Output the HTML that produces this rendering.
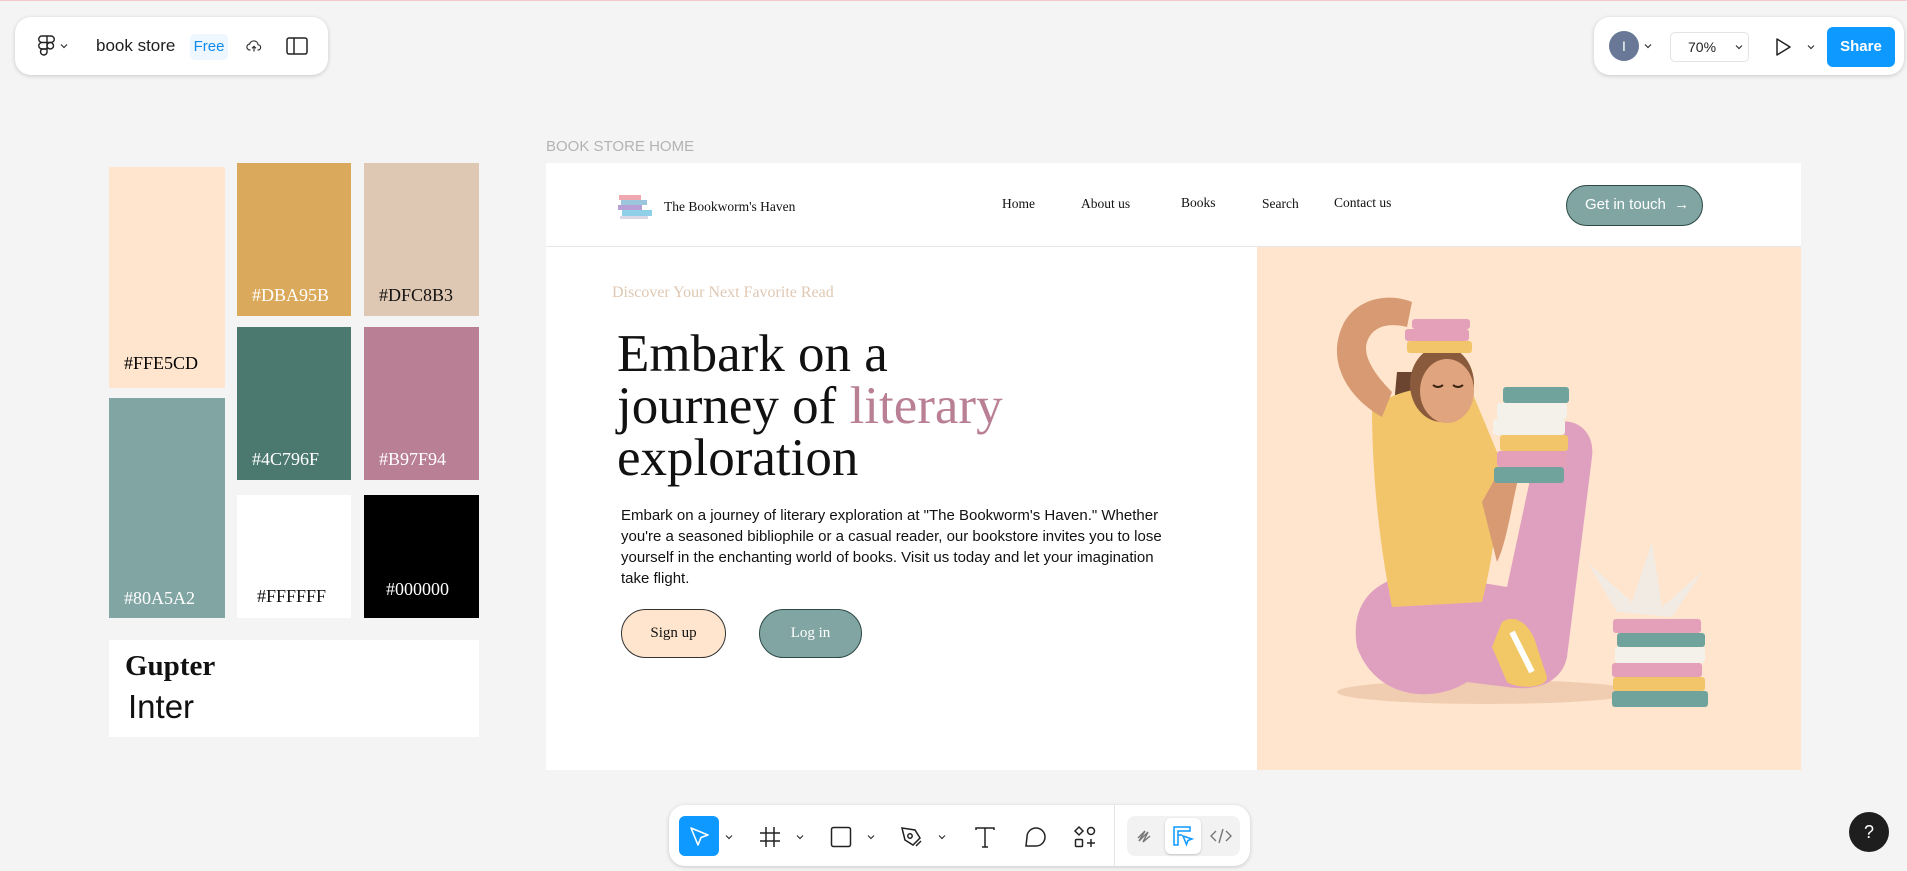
<!DOCTYPE html>
<html><head><meta charset="utf-8"><style>
*{box-sizing:border-box;margin:0;padding:0}
body{width:1907px;height:871px;background:#f4f4f4;position:relative;overflow:hidden;font-family:"Liberation Sans",sans-serif}
.a{position:absolute}
.panel{background:#fff;border-radius:16px;box-shadow:0 1px 4px rgba(0,0,0,.18)}
.sw{position:absolute;font-family:"Liberation Serif",serif;font-size:18px;padding-left:15px}
.serif{font-family:"Liberation Serif",serif}
.nav{position:absolute;top:196px;font-family:"Liberation Serif",serif;font-size:13.5px;color:#111}
</style></head><body>
<div class="a" style="left:0;top:0;width:1907px;height:1px;background:#f3c9cf"></div>

<div class="a panel" style="left:15px;top:17px;width:313px;height:58px">
  <svg class="a" style="left:22px;top:18px" width="20" height="22" viewBox="0 0 20 22" fill="none" stroke="#222" stroke-width="1.4"><path d="M5 1h5v6.5H5a3.25 3.25 0 010-6.5zM10 1h4a3.25 3.25 0 010 6.5h-4zM5 7.5h5V14H5a3.25 3.25 0 010-6.5z"/><circle cx="13.25" cy="10.75" r="3.25"/><path d="M5 14h5v3.25A3.25 3.25 0 115 14z"/></svg>
  <svg class="a" style="left:45px;top:26px" width="8" height="6" viewBox="0 0 8 6"><path d="M1 1.5l3 3 3-3" stroke="#333" fill="none" stroke-width="1.2"/></svg>
  <div class="a" style="left:81px;top:19px;font-size:17px;color:#1e1e1e">book store</div>
  <div class="a" style="left:175px;top:17px;width:38px;height:26px;background:#eef6ff;border-radius:5px;color:#0d8ce9;font-size:15px;text-align:center;line-height:26px">Free</div>
  <svg class="a" style="left:231px;top:22px" width="16" height="14" viewBox="0 0 16 14" fill="none" stroke="#333" stroke-width="1.2"><path d="M4.5 11H4a3 3 0 01-.3-6 4.3 4.3 0 018.4.8A2.6 2.6 0 0112 11h-.5"/><path d="M8 12.5V7.5M6 9.3l2-2 2 2"/></svg>
  <svg class="a" style="left:271px;top:20px" width="22" height="18" viewBox="0 0 22 18" fill="none" stroke="#222" stroke-width="1.5"><rect x="1" y="1" width="20" height="16" rx="2"/><path d="M8 1v16"/></svg>
</div>

<div class="a panel" style="left:1594px;top:17px;width:310px;height:58px">
  <div class="a" style="left:15px;top:14px;width:30px;height:30px;border-radius:50%;background:#6a7898;color:#fff;text-align:center;line-height:30px;font-size:14px">I</div>
  <svg class="a" style="left:50px;top:26px" width="8" height="6"><path d="M1 1.5l3 3 3-3" stroke="#333" fill="none" stroke-width="1.2"/></svg>
  <div class="a" style="left:76px;top:15px;width:79px;height:30px;border:1px solid #e3e3e3;border-radius:5px;font-size:14px;line-height:28px;padding-left:17px;color:#222">70%</div>
  <svg class="a" style="left:141px;top:27px" width="8" height="6"><path d="M1 1.5l3 3 3-3" stroke="#333" fill="none" stroke-width="1.2"/></svg>
  <svg class="a" style="left:180px;top:20px" width="18" height="20" viewBox="0 0 18 20"><path d="M3 2l13 8-13 8z" fill="none" stroke="#222" stroke-width="1.5" stroke-linejoin="round"/></svg>
  <svg class="a" style="left:213px;top:27px" width="8" height="6"><path d="M1 1.5l3 3 3-3" stroke="#333" fill="none" stroke-width="1.2"/></svg>
  <div class="a" style="left:233px;top:10px;width:68px;height:40px;background:#0d99ff;border-radius:6px;color:#fff;font-size:15px;font-weight:bold;text-align:center;line-height:40px">Share</div>
</div>

<div class="a" style="left:109px;top:167px;width:116px;height:221px;background:#FFE5CD"><div class="sw" style="top:186px">#FFE5CD</div></div>
<div class="a" style="left:109px;top:398px;width:116px;height:220px;background:#80A5A2"><div class="sw" style="top:190px;color:#fff">#80A5A2</div></div>
<div class="a" style="left:237px;top:163px;width:114px;height:153px;background:#DBA95B"><div class="sw" style="top:122px;color:#fff">#DBA95B</div></div>
<div class="a" style="left:364px;top:163px;width:115px;height:153px;background:#DFC8B3"><div class="sw" style="top:122px;color:#111">#DFC8B3</div></div>
<div class="a" style="left:237px;top:327px;width:114px;height:153px;background:#4C796F"><div class="sw" style="top:122px;color:#fff">#4C796F</div></div>
<div class="a" style="left:364px;top:327px;width:115px;height:153px;background:#B97F94"><div class="sw" style="top:122px;color:#fff">#B97F94</div></div>
<div class="a" style="left:237px;top:495px;width:114px;height:123px;background:#FFFFFF"><div class="sw" style="top:91px;color:#111;padding-left:20px">#FFFFFF</div></div>
<div class="a" style="left:364px;top:495px;width:115px;height:123px;background:#000"><div class="sw" style="top:84px;color:#fff;padding-left:22px">#000000</div></div>
<div class="a" style="left:109px;top:640px;width:370px;height:97px;background:#fff">
  <div class="a serif" style="left:16px;top:10px;font-size:29px;font-weight:bold;color:#111">Gupter</div>
  <div class="a" style="left:19px;top:48px;font-size:33px;color:#111">Inter</div>
</div>

<div class="a" style="left:546px;top:138px;font-size:15px;color:#b3b3b3">BOOK STORE HOME</div>
<div class="a" style="left:546px;top:163px;width:1255px;height:607px;background:#fff"></div>
<div class="a" style="left:546px;top:246px;width:1255px;height:1px;background:#e6e6e6"></div>
<div class="a" style="left:1257px;top:247px;width:544px;height:523px;background:#FFE5CD"></div>

<svg class="a" style="left:617px;top:194px" width="38" height="26" viewBox="0 0 38 26"><rect x="2" y="1" width="22" height="5" fill="#f0a8b0"/><rect x="4" y="6" width="26" height="5" fill="#9cc6dd"/><rect x="1" y="11" width="24" height="5" fill="#b7a0d6"/><rect x="5" y="16" width="30" height="6" fill="#8fd0e8"/><rect x="3" y="22" width="28" height="3" fill="#d8d8e8"/></svg>
<div class="a serif" style="left:664px;top:199px;font-size:13.5px;color:#111">The Bookworm's Haven</div>
<div class="nav" style="left:1002px">Home</div>
<div class="nav" style="left:1081px">About us</div>
<div class="nav" style="left:1181px;top:195px">Books</div>
<div class="nav" style="left:1262px">Search</div>
<div class="nav" style="left:1334px;top:195px">Contact us</div>
<div class="a" style="left:1566px;top:185px;width:137px;height:41px;background:#80A5A2;border:1.5px solid #2c4a45;border-radius:21px;color:#fff;font-size:15px;line-height:38px;padding-left:18px">Get in touch <span style="margin-left:4px">→</span></div>

<div class="a serif" style="left:612px;top:284px;font-size:16px;color:#dfc8b3">Discover Your Next Favorite Read</div>
<div class="a serif" style="left:617px;top:328px;font-size:53px;line-height:52px;color:#111">Embark on a<br>journey of <span style="color:#B97F94">literary</span><br>exploration</div>
<div class="a" style="left:621px;top:505px;width:560px;font-size:15px;line-height:21px;color:#111">Embark on a journey of literary exploration at "The Bookworm's Haven." Whether you're a seasoned bibliophile or a casual reader, our bookstore invites you to lose yourself in the enchanting world of books. Visit us today and let your imagination take flight.</div>
<div class="a serif" style="left:621px;top:609px;width:105px;height:49px;background:#FFE5CD;border:1.3px solid #333;border-radius:25px;text-align:center;line-height:46px;font-size:15px;color:#111">Sign up</div>
<div class="a serif" style="left:759px;top:609px;width:103px;height:49px;background:#80A5A2;border:1.3px solid #2c4a45;border-radius:25px;text-align:center;line-height:46px;font-size:15px;color:#fff">Log in</div>

<svg class="a" style="left:1257px;top:247px" width="544" height="523" viewBox="0 0 544 523">
  <ellipse cx="230" cy="445" rx="150" ry="12" fill="#f0cdb0"/>
  <path d="M100 400c-10-60 40-80 90-70l60 10 30-140c10-40 60-30 55 10l-25 200c-5 25-30 35-60 30l-40-5c-30 20-90 20-110-35z" fill="#dfa0c0"/>
  <path d="M245 375c15-10 30 5 35 25l10 30c0 12-30 12-40 5l-15-35z" fill="#f2c765"/>
  <path d="M255 385l20 40" stroke="#fff" stroke-width="6"/>
  <path d="M140 125c-4 40-6 80 2 110l20-5c-6-30-6-70-2-105z" fill="#6b4530"/>
  <path d="M115 160c30-20 70-25 100-15l25 60c5 50-5 110-15 150l-90 5c-10-50-20-120-20-200z" fill="#f3c56a"/>
  <path d="M125 170c-35-20-55-55-40-90 12-28 45-35 70-25l-5 25c-20-5-35 0-40 15-5 15 10 35 25 50z" fill="#d79a72"/>
  <path d="M225 255l15 60c10-20 15-60 25-100l-15-5z" fill="#d79a72"/>
  <ellipse cx="185" cy="137" rx="32" ry="38" fill="#8a5a3c"/>
  <ellipse cx="190" cy="144" rx="27" ry="32" fill="#e0a47e"/>
  <path d="M176 138q5 4 10 0M196 138q5 4 10 0" stroke="#3a2416" stroke-width="2" fill="none"/>
  <rect x="150" y="94" width="65" height="12" rx="3" fill="#f3c56a"/>
  <rect x="148" y="82" width="64" height="12" rx="3" fill="#e3a0b8"/>
  <rect x="155" y="72" width="58" height="10" rx="3" fill="#e3a0b8"/>
  <rect x="237" y="220" width="70" height="16" rx="3" fill="#6fa39c"/>
  <rect x="240" y="204" width="70" height="16" rx="3" fill="#e3a0b8"/>
  <rect x="243" y="188" width="68" height="16" rx="3" fill="#f3c56a"/>
  <rect x="236" y="172" width="72" height="16" rx="3" fill="#f4f0ea"/>
  <rect x="240" y="156" width="70" height="16" rx="3" fill="#f4f0ea"/>
  <rect x="246" y="140" width="66" height="16" rx="3" fill="#6fa39c"/>
  <path d="M270 300c10-30 40-30 50-10l-20 40z" fill="#dfa0c0"/>
  <path d="M360 365l-30-50 45 40 20-60 10 65 40-35-30 45z" fill="#f1ebe4"/>
  <rect x="356" y="372" width="88" height="14" rx="3" fill="#e3a0b8"/>
  <rect x="360" y="386" width="88" height="14" rx="3" fill="#6fa39c"/>
  <rect x="358" y="400" width="90" height="16" rx="3" fill="#f4f0ea"/>
  <rect x="355" y="416" width="90" height="14" rx="3" fill="#e3a0b8"/>
  <rect x="356" y="430" width="92" height="14" rx="3" fill="#f3c56a"/>
  <rect x="355" y="444" width="96" height="16" rx="3" fill="#6fa39c"/>
</svg>

<div class="a panel" style="left:669px;top:805px;width:581px;height:61px">
  <div class="a" style="left:10px;top:11px;width:40px;height:40px;background:#0d99ff;border-radius:6px"></div>
  <svg class="a" style="left:19px;top:20px" width="24" height="24" viewBox="0 0 24 24"><path d="M3 3l17 7-7 2.5L10 20z" fill="none" stroke="#fff" stroke-width="1.6" stroke-linejoin="round"/></svg>
  <svg class="a" style="left:56px;top:29px" width="8" height="6"><path d="M1 1.5l3 3 3-3" stroke="#333" fill="none" stroke-width="1.2"/></svg>
  <svg class="a" style="left:90px;top:21px" width="22" height="22" viewBox="0 0 22 22" stroke="#222" stroke-width="1.5"><path d="M7 1v20M15 1v20M1 7h20M1 15h20"/></svg>
  <svg class="a" style="left:127px;top:29px" width="8" height="6"><path d="M1 1.5l3 3 3-3" stroke="#333" fill="none" stroke-width="1.2"/></svg>
  <svg class="a" style="left:161px;top:21px" width="22" height="22"><rect x="1.5" y="1.5" width="19" height="19" rx="2" fill="none" stroke="#222" stroke-width="1.5"/></svg>
  <svg class="a" style="left:198px;top:29px" width="8" height="6"><path d="M1 1.5l3 3 3-3" stroke="#333" fill="none" stroke-width="1.2"/></svg>
  <svg class="a" style="left:231px;top:20px" width="24" height="24" viewBox="0 0 24 24" fill="none" stroke="#222" stroke-width="1.5"><path d="M2 3l13 2 5 8-7 7-8-5z"/><circle cx="10" cy="11" r="2.2"/><path d="M16 21l5-5"/></svg>
  <svg class="a" style="left:269px;top:29px" width="8" height="6"><path d="M1 1.5l3 3 3-3" stroke="#333" fill="none" stroke-width="1.2"/></svg>
  <svg class="a" style="left:305px;top:21px" width="22" height="22" viewBox="0 0 22 22" fill="none" stroke="#222" stroke-width="1.5"><path d="M2 4V2h18v2M11 2v19M8 21h6"/></svg>
  <svg class="a" style="left:354px;top:20px" width="24" height="24" viewBox="0 0 24 24"><path d="M3 21l1-9a9 9 0 119 9z" fill="none" stroke="#222" stroke-width="1.5"/></svg>
  <svg class="a" style="left:404px;top:20px" width="24" height="24" viewBox="0 0 24 24" fill="none" stroke="#222" stroke-width="1.5"><path d="M6 2l4 4-4 4-4-4z"/><circle cx="18" cy="6" r="3.5"/><rect x="2.5" y="14.5" width="7" height="7" rx="1"/><path d="M18 14v8M14 18h8"/></svg>
  <div class="a" style="left:445px;top:0;width:1px;height:61px;background:#e5e5e5"></div>
  <div class="a" style="left:458px;top:11px;width:113px;height:40px;background:#f2f2f2;border-radius:8px"></div>
  <svg class="a" style="left:466px;top:21px" width="22" height="22" viewBox="0 0 22 22" fill="none" stroke="#777" stroke-width="1.4"><path d="M3 12l7-7-6 10 9-9-5 10 7-6"/></svg>
  <div class="a" style="left:496px;top:13px;width:36px;height:36px;background:#fff;border-radius:6px;box-shadow:0 1px 2px rgba(0,0,0,.2)"></div>
  <svg class="a" style="left:503px;top:20px" width="22" height="22" viewBox="0 0 22 22" fill="none" stroke="#0d99ff" stroke-width="1.5"><path d="M2 2h16v4H6v14H2zM6 10h4"/><path d="M11 11l9 3-4 1.5-1.5 4z"/></svg>
  <svg class="a" style="left:541px;top:22px" width="22" height="18" viewBox="0 0 22 18" fill="none" stroke="#777" stroke-width="1.4"><path d="M6 4L1 9l5 5M16 4l5 5-5 5M13 2l-4 14"/></svg>
</div>
<div class="a" style="left:1849px;top:812px;width:40px;height:40px;border-radius:50%;background:#1e1e1e;color:#fff;text-align:center;line-height:40px;font-size:18px">?</div>
</body></html>
